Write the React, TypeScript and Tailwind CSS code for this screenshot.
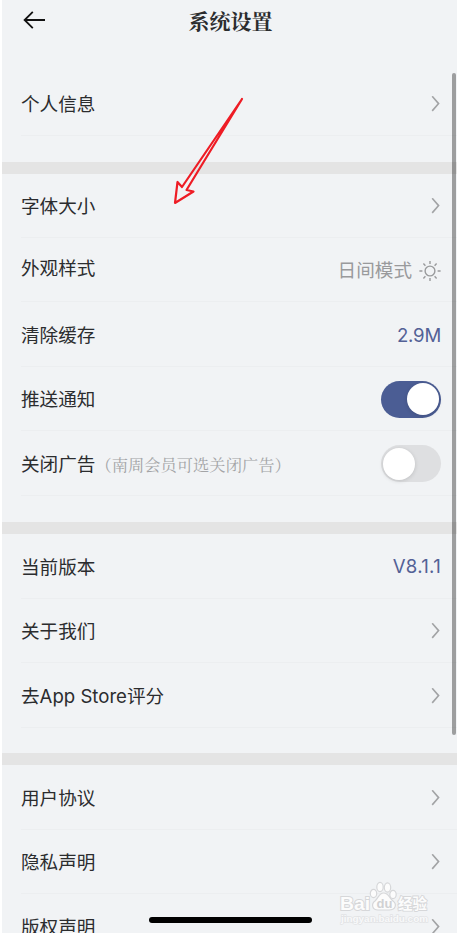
import type { ReactNode } from 'react';
import clsx from 'clsx';

const BackIcon = () => (
  <svg width="22" height="18" viewBox="0 0 22 18" fill="none" stroke="#111" strokeWidth="1.8">
    <path d="M9.8.9 1.6 9l8.2 8.1M1.8 9H22" />
  </svg>
);

const ChevronIcon = () => (
  <svg
    className="mr-px"
    width="9"
    height="16"
    viewBox="0 0 9 16"
    fill="none"
    stroke="#a2a3a5"
    strokeWidth="1.6"
  >
    <path d="M1.200.3 7.600 7.600l-6.400 7.300" />
  </svg>
);

const SunIcon = () => (
  <svg width="22" height="20" viewBox="0 0 22 20" fill="none" stroke="#999a9c" strokeWidth="1.4">
    <circle cx="11" cy="10" r="4.900" />
    <path d="M11 0v3M11 17v3M.4 10h3M18.600 10h3M4.400 2.600l2 2.100M15.600 15.300l2 2.100M17.600 2.600l-2 2.100M6.400 15.300l-2 2.100" />
  </svg>
);

const Toggle = ({ on }: { on?: boolean }) => (
  <div
    className={clsx(
      'flex h-[37px] w-[60px] items-center rounded-full px-0.5',
      on ? 'justify-end bg-[#4b5d94]' : 'justify-start bg-[#dedfe1]'
    )}
  >
    <div className="size-8 rounded-full bg-white shadow-[0_1px_4px_rgba(0,0,0,0.14)]"></div>
  </div>
);

type RowProps = {
  label: string;
  note?: string;
  className?: string;
  labelClassName?: string;
  children?: ReactNode;
};

const Row = ({
  label,
  note,
  className = 'h-[64.5px]',
  labelClassName = 'pt-0.5',
  children,
}: RowProps) => (
  <div className="pl-[19px]">
    <div
      className={clsx(
        'flex items-center justify-between border-b border-[#eceef0] pt-0.5 pr-4 whitespace-nowrap',
        className
      )}
    >
      <p className={clsx('text-[18.6px]', labelClassName)}>
        {label}
        {note && (
          <span className="font-['Noto_Serif_CJK_SC','Noto_Sans_CJK_SC',serif] text-[16.3px] text-[#a3a4a6]">
            {note}
          </span>
        )}
      </p>
      {children ?? <ChevronIcon />}
    </div>
  </div>
);

const Divider = () => <div className="h-3 bg-[#e4e4e4]"></div>;

const PointerArrow = () => (
  <svg
    className="absolute top-[97px] left-[171px]"
    width="74"
    height="109"
    viewBox="0 0 74 109"
    fill="none"
    stroke="#ee1c25"
    strokeWidth="2.2"
    strokeLinejoin="round"
  >
    <path d="M71 2 11 90l-4.500-5L4 106l18.500-11.500-7-1.500Z" />
  </svg>
);

const Watermark = () => (
  <div className="absolute top-[881px] left-[338px] h-[44px] w-[96px]">
    <svg width="96" height="44" viewBox="0 0 96 44" fill="#fcfcfc" stroke="#d6d7d9" strokeWidth="1.2">
      <ellipse cx="35.500" cy="12.500" rx="3.200" ry="4.200" />
      <ellipse cx="42" cy="6" rx="3.200" ry="4.600" />
      <ellipse cx="49.500" cy="6.500" rx="3.200" ry="4.600" />
      <ellipse cx="55" cy="13.500" rx="3.200" ry="4.200" />
      <path d="M45.500 12c-4.500 0-5 5-8.500 8-4 3-3 9 3 9h11c7 0 8-6 4-9-4-3-4-8-9.500-8Z" />
      <g
        fontFamily="'Liberation Sans', 'Noto Sans CJK SC', sans-serif"
        fontWeight="bold"
        style={{ paintOrder: 'stroke' }}
      >
        <text x="2" y="28.500" strokeWidth="2" fontSize="19" textLength="30" lengthAdjust="spacingAndGlyphs">
          Bai
        </text>
        <text x="38.500" y="27" fontSize="13" fill="#d0d1d3" stroke="none">
          du
        </text>
        <text x="60" y="27.500" strokeWidth="1.800" fontSize="15" textLength="29" lengthAdjust="spacingAndGlyphs">
          经验
        </text>
        <text
          x="3"
          y="41"
          fontSize="9.500"
          fill="#f8f9fa"
          stroke="#e2e3e5"
          strokeWidth="1.400"
          textLength="87"
          lengthAdjust="spacingAndGlyphs"
        >
          jingyan.baidu.com
        </text>
      </g>
    </svg>
  </div>
);

const App = () => {
  return (
    <div className="h-[936px] w-[457px] bg-white pl-0.5 font-[Inter,'Noto_Sans_CJK_SC',sans-serif] text-[#2b2c2e]">
      <div className="h-[933px] overflow-hidden bg-[#f1f3f5]">
        <header className="grid h-[71px] grid-cols-3 pt-0.5 pr-5 pl-[21px]">
          <div className="pt-[9px]">
            <BackIcon />
          </div>
          <h1 className="pl-px text-center font-['Noto_Serif_CJK_SC','Noto_Sans_CJK_SC',serif] text-[21px] leading-9 font-bold">
            系统设置
          </h1>
        </header>

        <section className="h-[90.5px]">
          <Row label="个人信息" />
        </section>
        <Divider />
        <section className="h-[348.500px]">
          <Row label="字体大小" className="h-16" />
          <Row label="外观样式" labelClassName="pb-0.5">
            <div className="flex items-center gap-[7px] pt-px text-[18.6px] text-[#999a9c]">
              日间模式
              <SunIcon />
            </div>
          </Row>
          <Row label="清除缓存">
            <span className="pt-0.5 text-[18.6px] tracking-[-0.2px] text-[#536196]">2.9M</span>
          </Row>
          <Row label="推送通知">
            <Toggle on />
          </Row>
          <Row label="关闭广告" note="（南周会员可选关闭广告）">
            <Toggle />
          </Row>
        </section>
        <Divider />
        <section className="h-[219px]">
          <Row label="当前版本">
            <span className="pt-px text-[18.6px] tracking-[0.3px] text-[#536196]">V8.1.1</span>
          </Row>
          <Row label="关于我们" />
          <Row label="去App Store评分" />
        </section>
        <Divider />
        <section>
          <Row label="用户协议" />
          <Row label="隐私声明" />
          <Row label="版权声明" />
        </section>
      </div>

      <PointerArrow />
      <div className="absolute top-[73px] left-[452px] h-[662px] w-[3.500px] rounded-full bg-black/35"></div>
      <div className="absolute top-[917px] left-[149px] h-1.5 w-[163px] rounded-full bg-black"></div>
      <Watermark />
    </div>
  );
};

export default App;
